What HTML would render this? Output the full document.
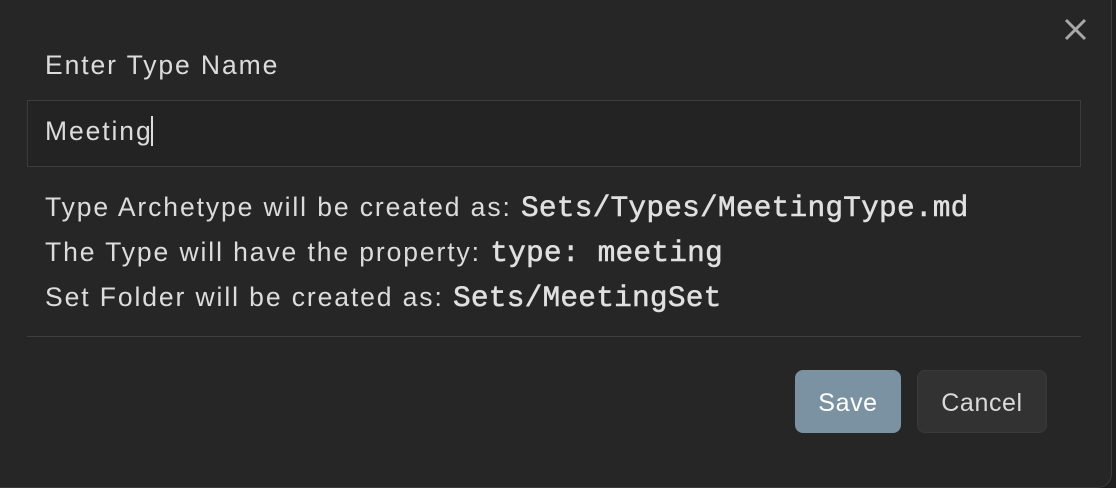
<!DOCTYPE html>
<html><head><style>
body{margin:0;width:1116px;height:488px;background:#1e1e1e;overflow:hidden;font-family:"Liberation Sans",sans-serif;}
.d{position:absolute;left:0;top:0;width:1111px;height:487px;background:#262626;border:1px solid #3a3a3a;border-left:none;border-top:none;border-radius:0 0 14px 0;}
.t{position:absolute;left:45px;color:#dcdcdc;font-size:26.5px;letter-spacing:1.9px;white-space:nowrap;}
.m{font-family:"Liberation Mono",monospace;font-size:29.5px;font-weight:normal;color:#e0e0e0;letter-spacing:0.2px;-webkit-text-stroke:0.5px #e0e0e0}
.in{position:absolute;left:27px;top:100px;width:1052px;height:65px;border:1px solid #3c3c3c;background:#232323;}
.sep{position:absolute;left:27px;top:336px;width:1054px;height:1px;background:#3e3e3e;}
.b{position:absolute;top:370px;height:63px;border-radius:8px;font-size:25px;display:flex;align-items:center;justify-content:center;padding-top:4px;box-sizing:border-box;letter-spacing:0.6px}
</style></head><body>
<div class="d">
<svg style="position:absolute;left:1064px;top:18px" width="23" height="23"><path d="M2 2L21 21M21 2L2 21" stroke="#a8a8a8" stroke-width="3"/></svg>
<div class="t" style="top:50px">Enter Type Name</div>
<div class="in"></div>
<div class="t" style="top:116px">Meeting<span style="display:inline-block;width:2px;height:30px;background:#ddd;vertical-align:-6px;margin-left:-2px"></span></div>
<div class="t" style="top:191px">Type Archetype will be created as: <span class="m">Sets/Types/MeetingType.md</span></div>
<div class="t" style="top:236px">The Type will have the property: <span class="m">type: meeting</span></div>
<div class="t" style="top:281px">Set Folder will be created as: <span class="m">Sets/MeetingSet</span></div>
<div class="sep"></div>
<div class="b" style="left:795px;width:106px;background:#7a92a1;color:#fff">Save</div>
<div class="b" style="left:917px;width:130px;background:#323232;color:#dadada;border:1px solid #3a3a3a">Cancel</div>
</div>
</body></html>
